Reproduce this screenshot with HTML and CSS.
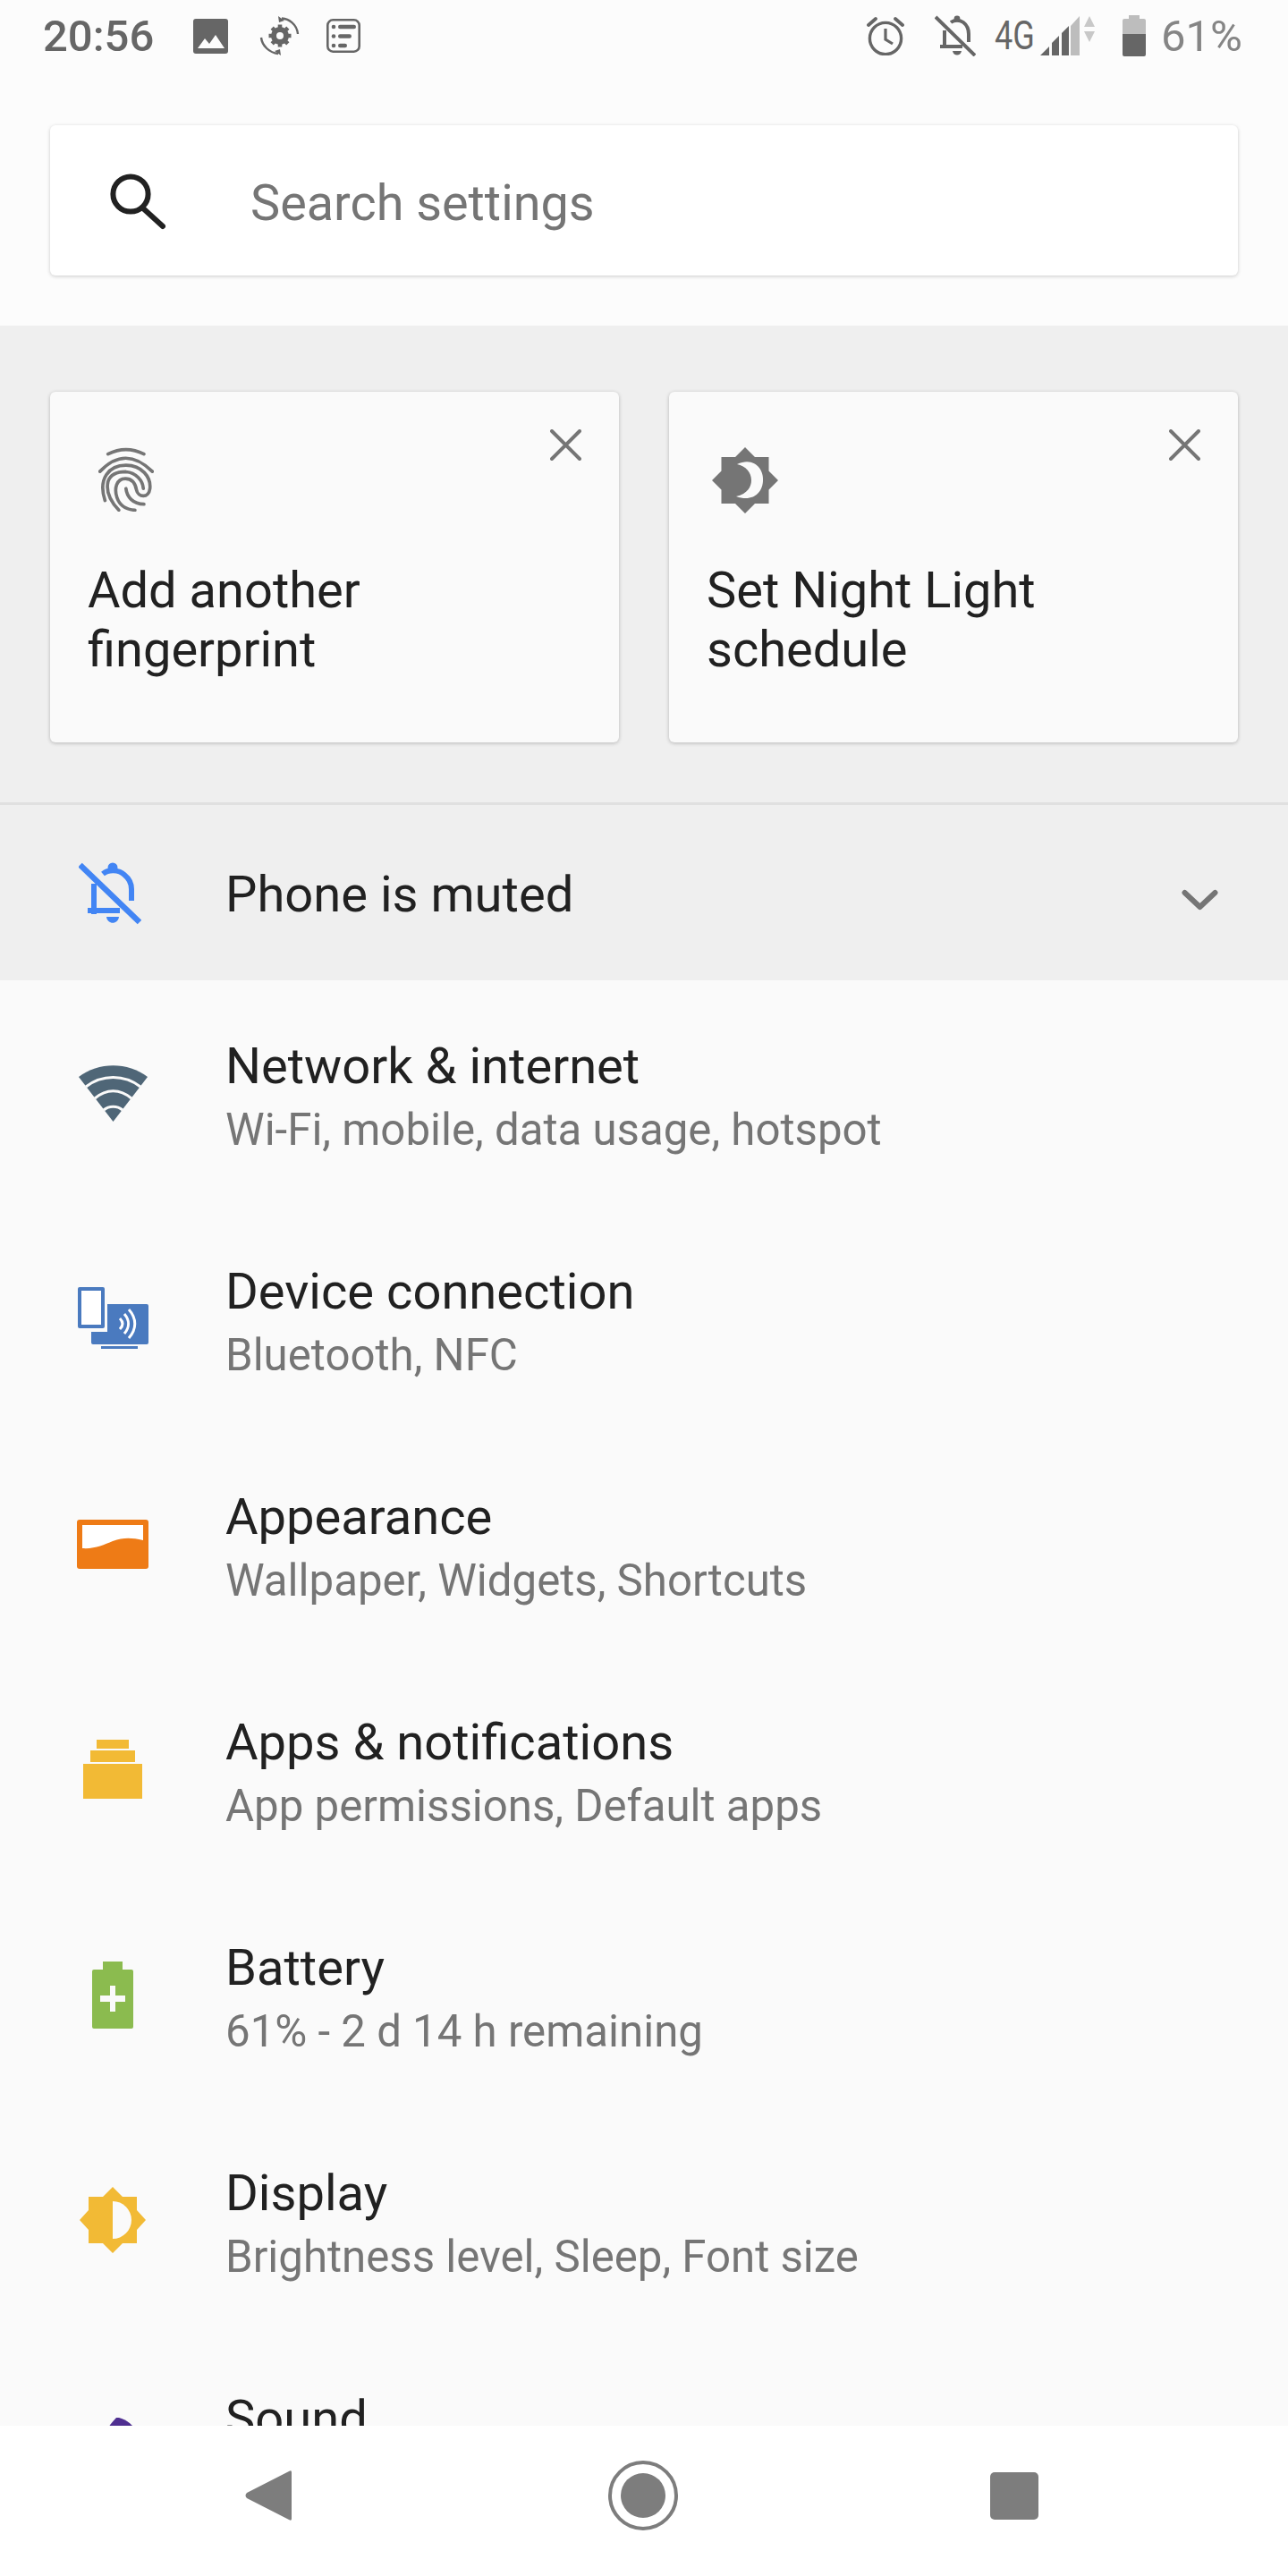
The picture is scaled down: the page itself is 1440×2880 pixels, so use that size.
FILE: index.html
```html
<!DOCTYPE html>
<html lang="en">
<head>
<meta charset="utf-8">
<title>Settings</title>
<link rel="stylesheet" href="styles.css">
</head>
<body>
<div class="screen">
  <header class="top">
    <div class="status">
      <span class="time">20:56</span>
      <svg class="st st-image" width="39" height="39" viewBox="0 0 39 39"><rect width="39" height="39" rx="3" fill="#666"/><path d="M5 33 L13 22 L18 28 L25 18 L35 33 Z" fill="#fcfcfc"/></svg>
      <svg class="st st-gear" width="45" height="44" viewBox="0 0 45 44"><g fill="none" stroke="#666" stroke-width="2.4"><path d="M25 2.5 C33 3 42 9 43 20"/><path d="M2 24 C3 33 11 41 21 42"/></g><path d="M21 0 L28 5 L22 7 Z M24 44 L17 39 L23 37 Z" fill="#666"/><circle cx="23" cy="22" r="7" fill="none" stroke="#666" stroke-width="6"/><g stroke="#666" stroke-width="4.6"><path d="M23 9.5 V34.5 M10.5 22 H35.5 M14.2 13.2 L31.8 30.8 M31.8 13.2 L14.2 30.8" stroke-dasharray="4.4 16.2"/></g></svg>
      <svg class="st st-list" width="38" height="38" viewBox="0 0 38 38"><rect x="1.3" y="1.3" width="35.4" height="35.4" rx="6" fill="none" stroke="#666" stroke-width="2.6"/><g fill="#666"><circle cx="8" cy="9" r="2.3"/><circle cx="8" cy="19.5" r="2.3"/><circle cx="8" cy="30" r="2.3"/><rect x="13" y="6.8" width="20" height="4.4" rx="2.2"/><rect x="13" y="17.3" width="15" height="4.4" rx="2.2"/><rect x="13" y="27.8" width="10" height="4.4" rx="2.2"/></g></svg>
      <span class="status-gap"></span>
      <svg class="st st-alarm" width="42" height="44" viewBox="0 0 42 44"><circle cx="21" cy="25" r="17.6" fill="none" stroke="#666" stroke-width="3.4"/><path d="M21 14 V26 L29 31" fill="none" stroke="#666" stroke-width="3.2"/><path d="M2 10 L10 3 M40 10 L32 3" stroke="#666" stroke-width="3.8" stroke-linecap="round"/></svg>
      <svg class="st st-bell" width="46" height="46" viewBox="0 0 46 46"><path d="M11 36 V17 M18 8 C22 5 28 5 32 8 C36 11 38 16 38 21 V30" fill="none" stroke="#666" stroke-width="4"/><circle cx="25" cy="4" r="3.4" fill="#666"/><path d="M6 35 H31" stroke="#666" stroke-width="4"/><path d="M20 40 H30 C29 46 21 46 20 40 Z" fill="#666"/><path d="M1 2 L45 45" stroke="#666" stroke-width="4"/></svg>
      <span class="net">4G</span>
      <svg class="st st-signal" width="44" height="44" viewBox="0 0 44 44"><path d="M34 11 L44 0 V44 H34 Z" fill="#bdbdbd"/><path d="M0 44 L10 34 V44 Z M13 30 L21 22 V44 H13 Z M24 19 L32 11 V44 H24 Z" fill="#666"/></svg>
      <svg class="st st-arrows" width="12" height="29" viewBox="0 0 12 29"><path d="M6 0 L12 12 H0 Z M0 17 H12 L6 29 Z" fill="#c8c8c8"/></svg>
      <svg class="st st-battery" width="26" height="46" viewBox="0 0 26 46"><path d="M7 0 H19 V4 H24 Q26 4 26 6 V21 H0 V6 Q0 4 2 4 H7 Z" fill="#bdbdbd"/><path d="M0 21 H26 V44 Q26 46 24 46 H2 Q0 46 0 44 Z" fill="#666"/></svg>
      <span class="pct">61%</span>
    </div>
    <div class="search">
      <svg class="search-icon" width="63" height="63" viewBox="0 0 63 63"><ellipse cx="23" cy="23" rx="19.6" ry="19.6" fill="none" stroke="#212121" stroke-width="6"/><path d="M36 38 L59 59" stroke="#212121" stroke-width="6" stroke-linecap="round"/></svg>
      <span class="search-text">Search settings</span>
    </div>
  </header>

  <section class="suggestions">
    <div class="cards">
      <article class="card">
        <svg class="close" width="35" height="35" viewBox="0 0 35 35"><path d="M2 2 L33 33 M33 2 L2 33" stroke="#757575" stroke-width="4" stroke-linecap="round"/></svg>
        <svg class="card-icon fp" width="62" height="72" viewBox="210 90 185 215"><g fill="none" stroke="#757575" stroke-width="11" stroke-linecap="round"><path d="M242 113 Q302 83 362 113"/><path d="M215 171 Q300 82 390 171"/><path d="M232 268 C208 195 245 150 302 150 C355 150 386 190 382 228 C378 262 342 258 337 232 C332 205 318 195 300 195 C270 195 262 228 272 258 C280 282 300 298 332 300"/><path d="M278 300 C248 268 235 235 242 205 C250 180 275 172 302 172 C335 175 358 200 360 228"/><path d="M302 228 C305 255 325 280 362 280"/></g></svg>
        <p class="card-title">Add another<br>fingerprint</p>
      </article>
      <article class="card">
        <svg class="close" width="35" height="35" viewBox="0 0 35 35"><path d="M2 2 L33 33 M33 2 L2 33" stroke="#757575" stroke-width="4" stroke-linecap="round"/></svg>
        <svg class="card-icon moon" width="74" height="74" viewBox="0 0 74 74"><path d="M37 0 L48 11 H63.500 V26.500 L74 37 L63.500 47.500 V63 H48 L37 74 L26 63 H10.500 V47.500 L0 37 L10.500 26.500 V11 H26 Z" fill="#757575"/><path d="M28 19 C48 10 58 26 57 37 C57 50 46 62 27 55 C40 52 44 44 44 37 C44 28 38 21 28 19 Z" fill="#fafafa"/></svg>
        <p class="card-title">Set Night Light<br>schedule</p>
      </article>
    </div>
  </section>

  <div class="muted">
    <span class="cell">
      <svg class="muted-bell" width="70" height="70" viewBox="0 0 70 70"><path d="M17 58 V24 M27 13 C33 8 45 8 51 14 C56 18 59 24 59 30 V43" fill="none" stroke="#4285f4" stroke-width="6"/><circle cx="38" cy="6" r="5.500" fill="#4285f4"/><path d="M10 54 H46" stroke="#4285f4" stroke-width="6"/><path d="M31 61 H45 C44 70 32 70 31 61 Z" fill="#4285f4"/><path d="M1.500 3 L68 67" stroke="#4285f4" stroke-width="6.500"/></svg>
    </span>
    <span class="muted-title">Phone is muted</span>
    <svg class="chevron" width="41" height="24" viewBox="0 0 41 24"><path d="M3.500 4 L20.500 20 L37.500 4" fill="none" stroke="#757575" stroke-width="6" stroke-linecap="round" stroke-linejoin="round"/></svg>
  </div>

  <main class="list">
    <div class="row">
      <span class="cell"><svg width="77" height="63" viewBox="0 0 77 63"><path d="M38.500 63 L0 13 C22 -4 55 -4 77 13 Z" fill="#4f6677"/><g fill="none" stroke="#fafafa" stroke-width="3"><path d="M8 24 C26 10 51 10 69 24"/><path d="M18 37 C31 26 46 26 59 37"/><path d="M28 50 C34 45 43 45 49 50"/></g></svg></span>
      <div class="text"><div class="title">Network &amp; internet</div><div class="sub">Wi-Fi, mobile, data usage, hotspot</div></div>
    </div>
    <div class="row">
      <span class="cell"><svg width="80" height="70" viewBox="0 0 80 70"><rect x="1" y="0" width="30" height="46" rx="2" fill="#4a7abf"/><rect x="5" y="4" width="22" height="38" fill="#fff"/><path d="M34 19 H78 Q80 19 80 21 V62 Q80 64 78 64 H18 Q16 64 16 62 V50 H34 Z" fill="#4a7abf"/><rect x="27" y="66" width="41" height="3" fill="#4a7abf"/><g fill="none" stroke="#fff" stroke-width="3"><path d="M48 35 C52 39 52 43 48 47"/><path d="M53 30 C59 37 59 45 53 52"/><path d="M58 25 C67 35 67 47 58 57"/></g></svg></span>
      <div class="text"><div class="title">Device connection</div><div class="sub">Bluetooth, NFC</div></div>
    </div>
    <div class="row">
      <span class="cell"><svg width="80" height="55" viewBox="0 0 80 55"><rect width="80" height="55" rx="3" fill="#ee7b16"/><path d="M6 6 H74 V23 C60 20 52 20 40 24 C30 28 20 33 6 32 Z" fill="#fff"/></svg></span>
      <div class="text"><div class="title">Appearance</div><div class="sub">Wallpaper, Widgets, Shortcuts</div></div>
    </div>
    <div class="row">
      <span class="cell"><svg width="66" height="66" viewBox="0 0 66 66"><path d="M15 0 H51 V10 H15 Z M8 12 H58 V25 H8 Z M0 27 H66 V66 H0 Z" fill="#f2ba35"/></svg></span>
      <div class="text"><div class="title">Apps &amp; notifications</div><div class="sub">App permissions, Default apps</div></div>
    </div>
    <div class="row">
      <span class="cell"><svg width="46" height="75" viewBox="0 0 46 75"><path d="M12 0 H34 V9 H44 Q46 9 46 11 V73 Q46 75 44 75 H2 Q0 75 0 73 V11 Q0 9 2 9 H12 Z" fill="#8bbb4f"/><path d="M20 27 H26 V38 H37 V45 H26 V56 H20 V45 H9 V38 H20 Z" fill="#fafafa"/></svg></span>
      <div class="text"><div class="title">Battery</div><div class="sub">61% - 2 d 14 h remaining</div></div>
    </div>
    <div class="row">
      <span class="cell"><svg width="74" height="74" viewBox="0 0 74 74"><path d="M37 0 L48 11 H64 V26 L74 37 L64 48 V63 H48 L37 74 L26 63 H10 V48 L0 37 L10 26 V11 H26 Z" fill="#f2ba35"/><path d="M37 16 A21 21 0 0 1 37 58 Z" fill="#fafafa"/></svg></span>
      <div class="text"><div class="title">Display</div><div class="sub">Brightness level, Sleep, Font size</div></div>
    </div>
    <div class="row">
      <span class="cell"><svg width="60" height="70" viewBox="0 0 60 70"><path d="M37 4 C45 6 54 12 57 22 L57 40 H21 V22 C25 14 30 8 34 4 Z" fill="#4f2f91"/></svg></span>
      <div class="text"><div class="title">Sound</div><div class="sub">Volume, Vibration, Do Not Disturb</div></div>
    </div>
  </main>

  <nav class="nav">
    <svg width="52" height="56" viewBox="0 0 52 56"><path d="M52 2 Q52 -1 49 1 L2 25 Q-1 28 2 31 L49 55 Q52 57 52 54 Z" fill="#7d7d7d"/></svg>
    <svg class="nav-home" width="78" height="78" viewBox="0 0 78 78"><circle cx="39" cy="39" r="37" fill="none" stroke="#7d7d7d" stroke-width="4"/><circle cx="39" cy="39" r="25" fill="#7d7d7d"/></svg>
    <svg class="nav-recent" width="54" height="53" viewBox="0 0 54 53"><rect width="54" height="53" rx="5" fill="#7d7d7d"/></svg>
  </nav>
</div>
</body>
</html>
```
FILE: styles.css
```css
* { box-sizing: border-box; }
html, body { margin: 0; padding: 0; }
body { font-family: Roboto, "Liberation Sans", sans-serif; background: #fafafa; color: #212121; }
svg { display: block; flex: none; }

.screen { position: relative; width: 1440px; height: 2880px; overflow: hidden; background: #fafafa; }

.top { height: 364px; background: #fcfcfc; }
.status { height: 80px; display: flex; align-items: center; padding: 0 51px 0 48px; color: #666; }
.time { font-size: 49px; font-weight: 500; width: 122px; line-height: 80px; letter-spacing: 0; margin-top: 2px; }
.st-image { margin-left: 46px; }
.st-gear { margin-left: 35px; }
.st-list { margin-left: 30px; }
.status-gap { flex: 1; }
.st-bell { margin-left: 34px; }
.net { width: 44px; margin-left: 21px; font-size: 45px; line-height: 80px; white-space: nowrap; transform: scaleX(.8); transform-origin: left center; }
.st-signal { margin-left: 7px; }
.st-arrows { margin-left: 5px; margin-top: -15px; }
.st-battery { margin-left: 31px; }
.pct { margin-left: 17px; font-size: 49px; line-height: 80px; color: #858585; margin-top: 2px; }

.search { margin: 60px 56px 0; height: 168px; background: #fff; border-radius: 6px; box-shadow: 0 1px 4px rgba(0,0,0,.2); display: flex; align-items: center; padding-left: 67px; }
.search-icon { margin-top: 2px; }
.search-text { margin: 6px 0 0 94px; font-size: 55.8px; color: #757575; }

.suggestions { height: 533px; background: #efefef; padding: 74px 56px 0; }
.cards { display: grid; grid-template-columns: 636px 636px; column-gap: 56px; }
.card { position: relative; height: 392px; background: #fafafa; border-radius: 6px; box-shadow: 0 1px 4px rgba(0,0,0,.24); padding: 62px 0 0 42px; }
.close { position: absolute; top: 42px; right: 42px; }
.card-icon { margin-left: 12px; }
.moon { margin: 0 0 -2px 6px; }
.card-title { margin: 55px 0 0; font-size: 56px; line-height: 66px; color: #212121; }

.muted { height: 199px; background: #efefef; border-top: 3px solid #e0e0e0; display: flex; align-items: center; }
.cell { width: 252px; flex: none; display: flex; justify-content: center; }
.muted-bell { margin: 2px 6px 0 0; }
.muted-title { flex: 1; margin-top: 4px; font-size: 56.1px; color: #212121; }
.chevron { margin: 16px 78px 0 0; }

.list { display: block; }
.row { height: 252px; display: flex; align-items: center; }
.text { margin-top: 9px; }
.title { font-size: 56.1px; line-height: 70px; color: #212121; }
.sub { margin-top: 3px; font-size: 49.2px; line-height: 66px; color: #757575; }

.nav { position: absolute; left: 0; right: 0; bottom: 0; height: 168px; background: #fff; display: flex; align-items: center; padding: 0 0 12px 274px; }
.nav-home { margin-left: 354px; }
.nav-recent { margin-left: 349px; }
```
